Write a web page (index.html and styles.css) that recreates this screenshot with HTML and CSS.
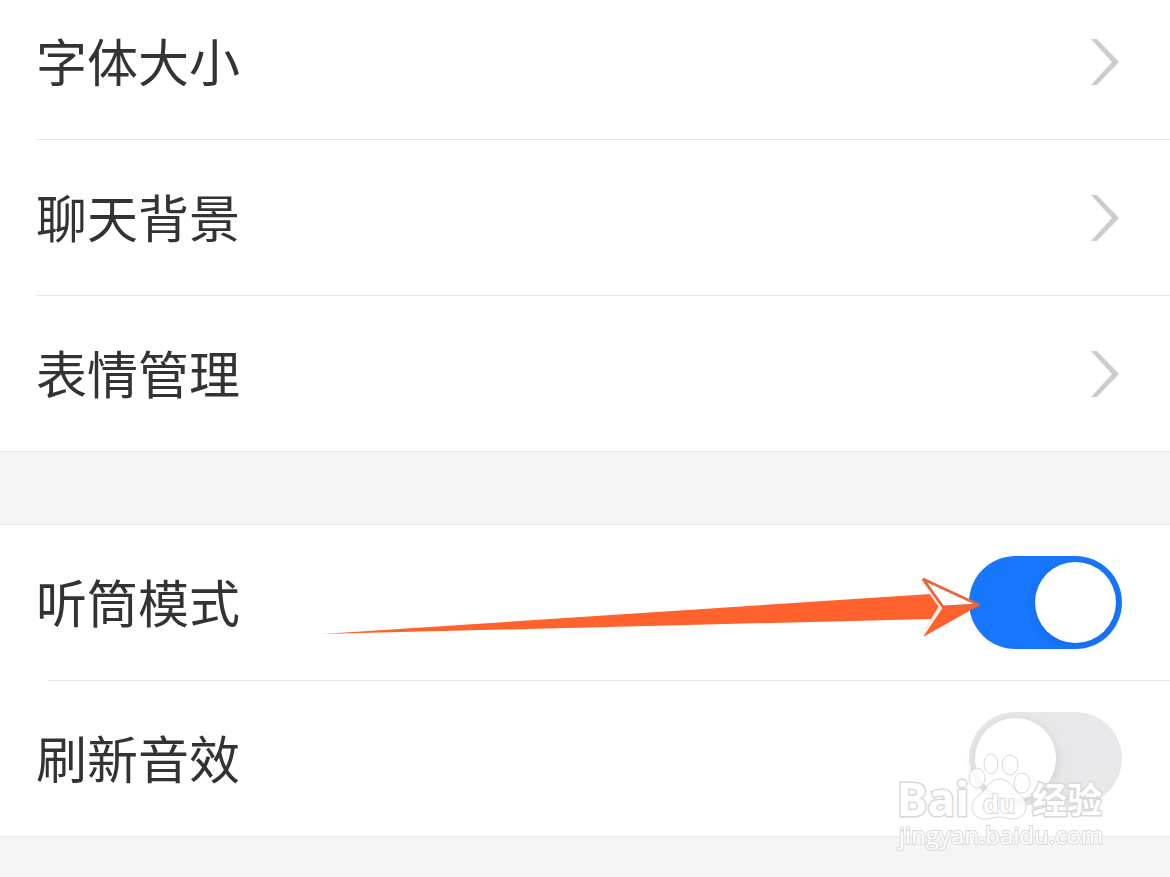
FILE: index.html
```html
<!DOCTYPE html>
<html lang="zh-CN">
<head>
    <meta charset="UTF-8">
    <meta name="viewport" content="width=device-width, initial-scale=1.0">
    <title>聊天设置</title>
    <link rel="stylesheet" href="styles.css">
</head>
<body>
    <main class="settings">
        <nav class="group">
            <a class="row" href="#font">
                <span class="name">字体大小</span>
                <svg class="chevron" viewBox="0 0 30 48"><path d="M1 1h6l22 23-22 23H1l21-23z"/></svg>
            </a>
            <a class="row" href="#background">
                <span class="name">聊天背景</span>
                <svg class="chevron" viewBox="0 0 30 48"><path d="M1 1h6l22 23-22 23H1l21-23z"/></svg>
            </a>
            <a class="row" href="#emoji">
                <span class="name">表情管理</span>
                <svg class="chevron" viewBox="0 0 30 48"><path d="M1 1h6l22 23-22 23H1l21-23z"/></svg>
            </a>
        </nav>
        <section class="group">
            <div class="row row-switch">
                <label class="name" for="earpiece">听筒模式</label>
                <input class="switch" type="checkbox" id="earpiece" checked>
                <svg class="arrow" viewBox="0 0 662 64">
                    <path d="M2 59L611 19l8 12-8 13z" fill="#ff622c"/>
                    <path d="M603 4l56 26-36 2z" fill="#fff"/>
                    <path d="M660 30l-37 2-20 30z" fill="#ff622c"/>
                    <path d="M603 4l56 26-36 2z" fill="none" stroke="#e5673d" stroke-width="3" stroke-linejoin="bevel"/>
                    <path d="M605 11l15 21-15 23" fill="none" stroke="#ffe9df" stroke-width="2"/>
                </svg>
            </div>
            <div class="row row-switch">
                <label class="name" for="sound">刷新音效</label>
                <input class="switch" type="checkbox" id="sound">
                <svg class="watermark" viewBox="0 0 220 110">
                    <ellipse cx="101" cy="18" rx="7" ry="10"/>
                    <ellipse cx="120" cy="19" rx="8" ry="10"/>
                    <ellipse cx="87" cy="32" rx="8" ry="10"/>
                    <ellipse cx="132" cy="37" rx="8" ry="10"/>
                    <path d="M109 33c-8 0-11 7-15 12-5 5-12 8-12 16 0 7 5 12 13 12 5 0 9-2 14-2s9 2 14 2c8 0 13-5 13-13 0-7-5-10-10-15-5-6-8-12-17-12z"/>
                    <text class="mark-bai" x="7" y="70">Bai</text>
                    <text class="mark-du" x="93" y="67">du</text>
                    <text class="mark-cn" x="142" y="67">经验</text>
                    <text class="mark-url" x="9" y="98">jingyan.baidu.com</text>
                </svg>
            </div>
        </section>
    </main>
</body>
</html>
```
FILE: styles.css
```css
body {
    display: flow-root;
    min-height: 100vh;
    margin: 0;
    background-color: #f5f5f5;
    color: #333;
    font-family: "Noto Sans CJK SC", sans-serif;
}
/* the list is scrolled a little under the top edge */
.settings {
    display: flex;
    flex-direction: column;
    gap: 72px;
    margin-top: -16px;
}
.group {
    background-color: #fff;
    border-bottom: 1px solid #ebebeb;
}
.group + .group {
    border-top: 1px solid #ebebeb;
}
.row {
    position: relative;
    display: flex;
    align-items: center;
    justify-content: space-between;
    height: 155px;
    padding: 0 48px 0 36px;
    color: inherit;
    text-decoration: none;
}
.row + .row {
    margin-top: 1px;
}
.row + .row::before {
    content: "";
    position: absolute;
    top: -1px;
    left: 36px;
    right: 0;
    height: 1px;
    background-color: #e8e8e8;
}
.row-switch + .row-switch::before {
    left: 48px;
}
.name {
    padding-bottom: 4px;
    font-size: 51px;
    line-height: 76px;
}
.chevron {
    width: 30px;
    height: 48px;
    margin-right: 2px;
    fill: #ccc;
}
.switch {
    appearance: none;
    box-sizing: border-box;
    width: 153px;
    height: 93px;
    margin: 0;
    padding: 6px;
    border-radius: 47px;
    background-color: #e8e8ea;
    cursor: pointer;
}
.switch::before {
    content: "";
    display: block;
    width: 81px;
    height: 81px;
    border-radius: 50%;
    background-color: #fff;
    box-shadow: 0 3px 12px rgba(0, 0, 0, 0.12);
}
.switch:checked {
    background-color: #1877ff;
}
.switch:checked::before {
    margin-left: auto;
}
.arrow {
    position: absolute;
    top: 50px;
    right: 188px;
    width: 662px;
    height: 64px;
    pointer-events: none;
}
.watermark {
    position: absolute;
    z-index: 1;
    top: 65px;
    right: 60px;
    width: 220px;
    height: 110px;
    overflow: visible;
    fill: #fff;
    fill-opacity: 0.8;
    stroke: #d8d8d8;
    stroke-width: 1px;
    pointer-events: none;
}
.watermark text {
    fill-opacity: 1;
    paint-order: stroke;
    stroke-width: 3px;
}
.mark-bai {
    font: bold 46px "Noto Sans", sans-serif;
}
.watermark .mark-du {
    font: bold 26px "Liberation Sans", sans-serif;
    stroke-width: 2px;
}
.mark-cn {
    font: bold 35px "Noto Sans CJK SC", sans-serif;
}
.watermark .mark-url {
    font: 24px "Open Sans", sans-serif;
    stroke-width: 2px;
}
```
